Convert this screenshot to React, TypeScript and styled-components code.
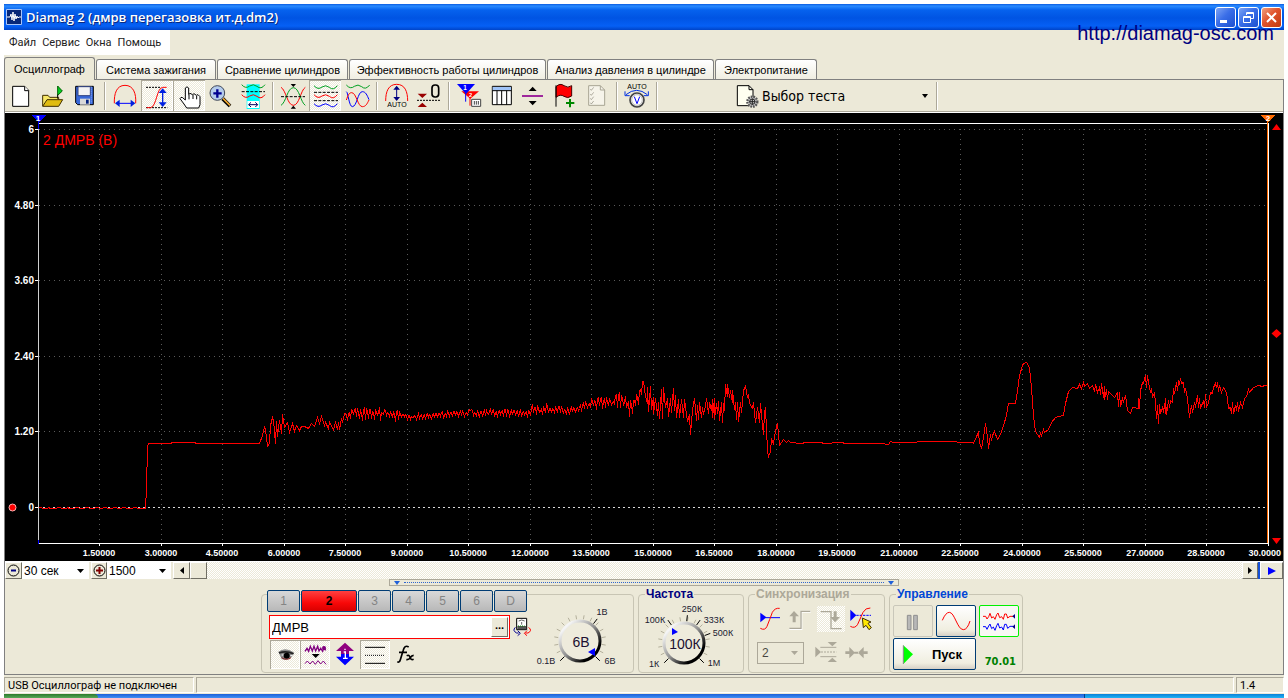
import React, { useLayoutEffect, useRef, useState } from 'react';
import styled, { createGlobalStyle, css } from 'styled-components';

const FACE = '#ece9d8';
const SHADOW = '#aca899';
const SANS = '"Liberation Sans", Arial, sans-serif';
const TAHOMA = 'Tahoma, "DejaVu Sans Condensed", "DejaVu Sans", sans-serif';
const SMALL_UI = 'Roboto, "Noto Sans", sans-serif';

const dither = css`
  background: conic-gradient(#fff 25%, ${FACE} 0 50%, #fff 0 75%, ${FACE} 0) 0 0 / 2px 2px;
`;

const Global = createGlobalStyle`
  * { box-sizing: border-box; }
  body { margin: 0; background: #fff; font-family: ${SANS}; font-size: 11px; color: #000; }
  button, input, select { font-family: inherit; font-size: inherit; color: inherit; margin: 0; }
  svg { display: block; flex: none; }
`;

/* ---------- window frame ---------- */

const Window = styled.div`
  position: relative;
  margin: 4px 4px 0;
  background: ${FACE};
`;

const TitleBar = styled.header`
  display: flex;
  align-items: center;
  gap: 4px;
  height: 26px;
  padding: 0 2px;
  background: linear-gradient(#0a5be0 0, #2a8bff 2px, #0662ee 6px, #0054e3 14px, #0560f5 22px, #0044c8 26px);
`;

const Title = styled.h1`
  flex: 1;
  margin: 0;
  font: 600 13px/20px "Open Sans", "Noto Sans", sans-serif;
  color: #fff;
  text-shadow: 1px 1px 0 #0a2a80;
  white-space: nowrap;
`;

const WindowButtons = styled.div`
  display: flex;
  gap: 2px;
`;

const WindowButton = styled.button<{ $close?: boolean }>`
  width: 21px;
  height: 21px;
  padding: 0;
  border: 1px solid #fff;
  border-radius: 3px;
  background: ${p => (p.$close ? 'linear-gradient(135deg, #f0a080, #e0532c 45%, #c03a10)' : 'linear-gradient(135deg, #7ea4f4, #3a6ee8 45%, #1c50d0)')};
`;

const SiteLink = styled.a`
  position: absolute;
  right: 10px;
  top: 17px;
  font-size: 20px;
  line-height: 24px;
  color: #000080;
  text-decoration: none;
`;

const MenuBar = styled.nav`
  display: flex;
  height: 25px;
`;

const MenuList = styled.div`
  display: flex;
  gap: 6px;
  padding: 0 9px 0 5px;
  background: #fff;
`;

const MenuItem = styled.button`
  padding: 0;
  border: 0;
  background: none;
  font: 11px/24px ${SMALL_UI};
  color: #222;
`;

/* ---------- tabs ---------- */

const Tabs = styled.div`
  display: flex;
  align-items: flex-end;
  gap: 1px;
  height: 24px;
`;

const Tab = styled.button<{ $width: number; $active?: boolean }>`
  width: ${p => p.$width}px;
  height: ${p => (p.$active ? 23 : 20)}px;
  padding: 0;
  border: 1px solid #808080;
  border-bottom: 0;
  border-radius: 3px 3px 0 0;
  background: ${p => (p.$active ? FACE : 'linear-gradient(#fff, #f0eee2)')};
  margin-bottom: ${p => (p.$active ? -1 : 0)}px;
  position: relative;
  z-index: ${p => (p.$active ? 1 : 0)};
  white-space: nowrap;
`;

const TabPage = styled.main`
  border: 1px solid #808080;
`;

/* ---------- toolbar ---------- */

const Toolbar = styled.div`
  display: flex;
  height: 33px;
  border-bottom: 1px solid #fff;
  box-shadow: inset 0 -1px 0 ${SHADOW};
`;

const ToolButton = styled.button<{ $down?: boolean }>`
  width: 32px;
  height: 31px;
  padding: 0;
  border: 0;
  background: none;
  ${p => p.$down && css`
    ${dither}
    box-shadow: inset 1px 1px 0 ${SHADOW}, inset -1px -1px 0 #fff;
  `}
`;

const Separator = styled.span`
  width: 2px;
  height: 28px;
  margin: 2px 3px;
  border-left: 1px solid ${SHADOW};
  border-right: 1px solid #fff;
`;

const TestPicker = styled.button`
  display: flex;
  align-items: center;
  gap: 3px;
  width: 202px;
  height: 31px;
  margin-left: 70px;
  padding: 0 5px 0 2px;
  border: 0;
  background: none;
  font: 14px/16px ${TAHOMA};
  text-align: left;
`;

const PickerLabel = styled.span`
  flex: 1;
`;

/* ---------- chart ---------- */

const ChartBox = styled.section`
  height: 448px;
  overflow: hidden;
  background: #000;
`;

/* ---------- time base row ---------- */

const TimeRow = styled.div`
  display: flex;
  height: 18px;
  border-top: 1px solid #fff;
`;

const SmallButton = styled.button<{ $width: number }>`
  display: flex;
  align-items: center;
  justify-content: center;
  width: ${p => p.$width}px;
  height: 17px;
  padding: 0;
  border: 1px solid;
  border-color: #fff #716f64 #716f64 #fff;
  background: ${FACE};
`;

const SelectWrap = styled.label<{ $width: number }>`
  display: flex;
  align-items: center;
  width: ${p => p.$width}px;
  margin-right: 2px;
  padding: 0 5px 0 2px;
  background: #fff;
`;

const Select = styled.select`
  flex: 1;
  min-width: 0;
  height: 17px;
  padding: 0;
  border: 0;
  appearance: none;
  background: none;
  font-size: 12px;
`;

const Track = styled.div`
  flex: 1;
  ${dither}
`;

const BlueBar = styled.span`
  width: 2px;
  background: #1450d8;
`;

/* ---------- control panel ---------- */

const Panel = styled.section`
  display: flex;
  flex-direction: column;
  align-items: center;
  padding-bottom: 1px;
`;

const Splitter = styled.div`
  display: flex;
  align-items: center;
  width: 510px;
  height: 7px;
  padding: 0 4px;
  gap: 4px;
  border: 1px solid ${SHADOW};
`;

const SplitterDots = styled.span`
  flex: 1;
  border-top: 1px dotted #3068d0;
`;

const Groups = styled.div`
  display: flex;
  align-items: flex-end;
  gap: 4px;
  height: 87px;
  padding-right: 4px;
`;

const ChannelGroup = styled.div`
  display: flex;
  width: 373px;
  height: 79px;
  border: 1px solid #c8c5b4;
  border-radius: 4px;
`;

const ChannelColumn = styled.div`
  width: 270px;
  padding-left: 5px;
`;

const ChannelButtons = styled.div`
  display: flex;
  gap: 1px;
  margin-top: -5px;
`;

const ChannelButton = styled.button<{ $on?: boolean }>`
  width: ${p => (p.$on ? 56 : 33)}px;
  height: 22px;
  padding: 0;
  border: 1px solid #003c74;
  border-radius: 2px;
  font-size: 12px;
  font-weight: ${p => (p.$on ? 'bold' : 'normal')};
  color: ${p => (p.$on ? '#000' : '#848484')};
  background: ${p => (p.$on ? 'linear-gradient(#ff4040, #f80808 60%, #d80000)' : 'linear-gradient(#d8d8d8, #b8b8b8)')};
`;

const NameRow = styled.div`
  display: flex;
  align-items: center;
  gap: 3px;
  margin: 3px 0 1px 2px;
`;

const NameField = styled.div`
  display: flex;
  align-items: center;
  width: 241px;
  height: 24px;
  padding: 1px;
  border: 1px solid #f00;
  background: #fff;
`;

const NameInput = styled.input`
  flex: 1;
  min-width: 0;
  height: 20px;
  padding: 0 1px;
  border: 0;
  background: none;
  font-size: 13px;
`;

const EllipsisButton = styled.button`
  width: 17px;
  height: 20px;
  padding: 0 0 5px;
  border: 1px solid;
  border-color: #fff #716f64 #716f64 #fff;
  background: ${FACE};
  font-weight: bold;
  line-height: 12px;
`;

const ModeRow = styled.div`
  display: flex;
  padding-left: 3px;
`;

const ModeButton = styled.button<{ $down?: boolean }>`
  width: 30px;
  height: 29px;
  padding: 0;
  border: 0;
  background: none;
  ${p => p.$down && css`
    ${dither}
    box-shadow: inset 1px 1px 0 ${SHADOW}, inset -1px -1px 0 #fff;
  `}
`;

const Group = styled.fieldset<{ $width: number }>`
  width: ${p => p.$width}px;
  height: 85px;
  min-width: 0;
  margin: 0;
  padding: 0;
  border: 1px solid #c8c5b4;
  border-radius: 4px;
`;

const Legend = styled.legend<{ $color: string }>`
  margin-left: 6px;
  padding: 0 1px;
  font-size: 12px;
  font-weight: bold;
  line-height: 13px;
  color: ${p => p.$color};
`;

const SyncRow = styled.div`
  display: flex;
  align-items: center;
  gap: 2px;
  height: 34px;
  padding: 2px 0 0 8px;
`;

const SyncButton = styled.button<{ $down?: boolean }>`
  width: 28px;
  height: 26px;
  padding: 0;
  border: 0;
  background: none;
  ${p => p.$down && dither}
`;

const SyncSelect = styled.label`
  display: flex;
  align-items: center;
  width: 47px;
  height: 22px;
  margin-right: 5px;
  padding: 0 5px 0 4px;
  border: 1px solid ${SHADOW};
`;

const RunGrid = styled.div`
  display: grid;
  grid-template-columns: 40px 40px 40px;
  grid-template-rows: 32px 32px;
  gap: 1px 3px;
  padding: 4px 0 0 3px;
`;

const RunButton = styled.button<{ $edge: string; $fill: string; $wide?: boolean }>`
  display: flex;
  align-items: center;
  padding: 0;
  border: 1px solid ${p => p.$edge};
  border-radius: 2px;
  background: ${p => p.$fill};
  grid-column: ${p => (p.$wide ? 'span 2' : 'auto')};
  font-size: 13px;
  font-weight: bold;
`;

const Reading = styled.output`
  align-self: end;
  justify-self: end;
  padding: 0 3px 1px 0;
  font: bold 11px/14px ${TAHOMA};
  color: #008000;
`;

/* ---------- bottom ---------- */

const StatusBar = styled.footer`
  display: flex;
  gap: 2px;
  height: 19px;
  padding: 2px 0 1px;
  font: 11px/15px ${SMALL_UI};
`;

const StatusCell = styled.div<{ $width?: number }>`
  ${p => (p.$width ? css`width: ${p.$width}px;` : css`flex: 1;`)}
  padding-left: 3px;
  border: 1px solid;
  border-color: ${SHADOW} #fff #fff ${SHADOW};
  white-space: nowrap;
`;

const TaskBar = styled.div`
  display: flex;
  height: 4px;
  background: linear-gradient(#1c5fd8, #4090f4);
`;

const TaskStart = styled.span`
  width: 94px;
  border-radius: 0 4px 0 0;
  background: linear-gradient(#2c7a2c, #58a858);
`;

const TaskTray = styled.span`
  width: 200px;
  margin-left: auto;
  border-left: 1px solid #083c90;
  background: linear-gradient(#0c80d8, #20b4f4);
`;

/* ---------- drawings ---------- */

/* Icons are drawn on a grid with three units to the pixel. */
const Glyph = ({ x, y, w, h, children }: { x: number; y: number; w: number; h: number; children: React.ReactNode }) => (
  <svg width={w} height={h} viewBox={`${x} ${y} ${w * 3} ${h * 3}`} fill="none" strokeWidth="3" aria-hidden="true" fontFamily="Liberation Sans">
    {children}
  </svg>
);

const Caret = ({ color = '#000', size = 7 }: { color?: string; size?: number }) => (
  <svg width={size} height="4" viewBox="0 0 8 4" preserveAspectRatio="none" aria-hidden="true">
    <path d="M0 0h8L4 4z" fill={color} />
  </svg>
);

const wave = (x: number, y: number) => `M${x} ${y - 5}q12 14 24 4q11 -8 22 1q12 11 24 -5`;

const TOOLS: { label: string; x: number; y: number; down?: boolean; gapAfter?: boolean; art: React.ReactNode }[] = [
  { label: 'Новый', x: 15, y: 240, art: (
    <g stroke="#000" fill="#fff"><path d="M38 259h36l12 12v48H38z" /><path d="M74 259v13h12" /></g>
  ) },
  { label: 'Открыть', x: 111, y: 240, art: (
    <g stroke="#403000">
      <path d="M128 318v-32h16l5 6h27v8" fill="#f8e868" />
      <path d="M141 299h47l-12 20h-48z" fill="#e0bc10" />
      <path d="M173 258v28l14-13z" fill="#00d020" stroke="#006000" />
      <path d="M173 284v12" stroke="#000" />
    </g>
  ) },
  { label: 'Сохранить', x: 207, y: 240, gapAfter: true, art: (
    <g stroke="#000">
      <path d="M227 259h53v55h-47l-6-6z" fill="#3868d8" />
      <path d="M234 260h37v27h-37z" fill="#f4f4f4" stroke="#304080" />
      <path d="M274 260v50" stroke="#90b0ff" strokeDasharray="3 3" />
      <path d="M240 296h30v18h-30z" fill="#d8d8d8" stroke="none" />
      <path d="M258 299h8v12h-8z" fill="#002080" stroke="none" />
    </g>
  ) },
  { label: 'Масштаб по времени', x: 327, y: 240, art: (
    <g><path d="M343 310c-1-28 6-54 32-54s34 26 32 54" stroke="#f00" />
      <path d="M349 310h52" stroke="#00f" /><path d="M345 310l14-11v22zM406 310l-14-11v22z" fill="#0020e0" /></g>
  ) },
  { label: 'Масштаб по амплитуде', x: 423, y: 240, down: true, art: (
    <g><path d="M438 262h42M438 323h64" stroke="#000" strokeDasharray="6 3" />
      <path d="M440 323h12c18-4 18-60 36-61h12" stroke="#f00" />
      <path d="M488 272v42" stroke="#0020e0" strokeWidth="4" /><path d="M488 265l12 14h-24zM488 321l12-14h-24z" fill="#0020e0" /></g>
  ) },
  { label: 'Рука', x: 519, y: 240, down: true, art: (
    <path d="M556 300V264q5-7 10 0v20l4-4 8 4 4-3 7 5 5-2 6 6v24l-4 10h-36l-8-12-12-16q2-6 8-3z M567 284v14M579 285v12M590 288v10" fill="#fff" stroke="#000" />
  ) },
  { label: 'Лупа', x: 615, y: 240, art: (
    <g><path d="M668 296l22 22" stroke="#000" strokeWidth="11" /><path d="M669 295l21 21" stroke="#f0a830" strokeWidth="5" />
      <circle cx="652" cy="279" r="22" fill="#b4ccec" stroke="#404858" />
      <path d="M640 280h25M652 268v25" stroke="#000090" strokeWidth="7" /></g>
  ) },
  { label: 'Диапазон', x: 711, y: 240, gapAfter: true, art: (
    <g><path d="M740 253h39v74h-39z" fill="#0ff" />
      <path d={wave(725, 259)} stroke="#00a020" /><path d={wave(725, 289)} stroke="#f00" />
      <path d="M725 275h70" stroke="#000" strokeDasharray="9 4" />
      <path d="M742 303h35v21h-35z" fill="#fff" /><path d="M746 314h27M753 307l-7 7 7 7M766 307l7 7-7 7" stroke="#000060" /></g>
  ) },
  { label: 'Совместить', x: 831, y: 240, art: (
    <g><path d="M843 262c15 8 19 54 37 54s22-46 36-54" stroke="#f00" />
      <path d="M843 316c15-8 19-53 37-53s22 45 36 53" stroke="#00a020" />
      <path d="M843 290h72" stroke="#000" strokeDasharray="9 4" />
      <path d="M872 252h16l-8 9zM872 326h16l-8-9z" fill="#000" /></g>
  ) },
  { label: 'Раздельно', x: -33, y: 90, down: true, art: (
    <g><path d={wave(-18, 112)} stroke="#00a020" /><path d={wave(-18, 139)} stroke="#f00" /><path d={wave(-18, 166)} stroke="#00f" />
      <path d="M-18 127h72M-18 152h72" stroke="#000" strokeDasharray="9 4" /></g>
  ) },
  { label: 'Вместе', x: 63, y: 90, gapAfter: true, art: (
    <g><path d={wave(79, 110)} stroke="#00a020" />
      <path d="M79 125c5 0 8 45 18 45 14 0 16-45 30-45 10 0 14 10 20 24" stroke="#00f" />
      <path d="M79 150c5-14 8-22 16-22 14 0 18 42 32 42 10 0 14-8 20-20" stroke="#f00" /></g>
  ) },
  { label: 'Авто масштаб', x: 183, y: 90, art: (
    <g><path d="M197 153c0-28 8-50 33-50s33 22 33 50" stroke="#f00" />
      <path d="M230 112v36" stroke="#000080" /><path d="M230 107l10 12h-20zM230 153l10-12h-20z" fill="#000080" />
      <text x="231" y="171" fontSize="21" textAnchor="middle" fill="#000">AUTO</text></g>
  ) },
  { label: 'Ноль', x: 279, y: 90, gapAfter: true, art: (
    <g><path d="M293 131h28l-14 13zM293 171h28l-14-13z" fill="#900" />
      <path d="M291 151h69" stroke="#000" strokeDasharray="6 3" />
      <rect x="336" y="105" width="20" height="36" rx="9" stroke="#000" strokeWidth="5" /></g>
  ) },
  { label: 'Маркеры', x: 399, y: 90, art: (
    <g><path d="M424 124h53l-26 22z" fill="#f00" /><path d="M450 140v27" stroke="#f00" />
      <path d="M411 102h54l-27 30z" fill="#00f" /><path d="M437 125v30" stroke="#00f" />
      <text x="435" y="120" fontSize="19" fontWeight="bold" textAnchor="middle" fill="#fff">1</text>
      <text x="452" y="142" fontSize="17" fontWeight="bold" textAnchor="middle" fill="#fff">2</text>
      <path d="M455 148h27v21h-27z" fill="#fff" stroke="#444" /><path d="M463 153v11M469 153v11M475 153v11" stroke="#444" /></g>
  ) },
  { label: 'Таблица', x: 495, y: 90, art: (
    <g stroke="#000"><path d="M517 109h57v55h-57z" fill="#fff" /><path d="M518 111h55v10h-55z" fill="#a0c4f8" stroke="none" />
      <path d="M517 122h57M531 122v42M545 122v42M560 122v42" /></g>
  ) },
  { label: 'Разделить', x: 591, y: 90, art: (
    <g><path d="M626 123h24l-12-13zM626 153h24l-12 13z" fill="#000" /><path d="M606 138h63" stroke="#900090" strokeWidth="5" /></g>
  ) },
  { label: 'Флаг', x: 687, y: 90, art: (
    <g><path d="M708 110q12-12 24-3t23 0v31q-12 9-23 1t-24 3z" fill="#f00" stroke="#400" />
      <path d="M708 106v64" stroke="#000" /><path d="M738 159h25M750 147v25" stroke="#008800" strokeWidth="6" /></g>
  ) },
  { label: 'Список', x: 783, y: 90, gapAfter: true, art: (
    <g stroke="#a8a594"><path d="M806 107h35l13 13v46h-48z" fill="#f6f4ea" /><path d="M841 107v13h13" />
      <path d="M811 117l3 4 7-9M811 132l3 4 7-9M811 145l3 4 7-9M811 158l3 4 7-9" stroke="#8c8a7c" strokeWidth="2" /></g>
  ) },
  { label: 'Авто', x: 903, y: 90, gapAfter: true, art: (
    <g><text x="951" y="117" fontSize="21" textAnchor="middle" fill="#000">AUTO</text>
      <path d="M918 134q32-26 64 0" stroke="#0030e0" /><path d="M915 124v13h14M985 124v13h-14" stroke="#0030e0" />
      <circle cx="951" cy="150" r="21" fill="#fff" stroke="#444" strokeWidth="5" />
      <circle cx="951" cy="150" r="16" stroke="#bbb" />
      <path d="M943 140l8 21 8-21" stroke="#00f" /></g>
  ) },
];

/* ---------- trace ---------- */

/* Sample positions run from 38 (0 s) to 1268 (30 s); levels run from 129 (6 V) to 507 (0 V). */
const START = '38,507 41,507 42,508 47,508 48,507 50,508 56,508 57,507 60,507 61,508 66,508 67,507 69,508 74,508 75,507 78,507 79,508 84,508 85,507 88,507 89,508 94,508 95,507 98,507 99,508 102,508 103,507 106,507 107,508 112,508 113,507 116,507 117,508 121,508 122,507 125,507 126,508 132,508 133,507 136,507 137,508 145,508 146,488 147,446 148,443 170,443 172,442 194,442 196,443 259,443 262,435 264,427 265,429 267,446 269,443 270,425 272,417 273,420 275,443 276,421 277,436 279,420 281,433 282,414 284,427 287,422 289,432 292,423 294,431 296,425 299,430 301,426 304,426 308,428 311,423 314,426 317,417 319,423 321,416 324,425 325,422 328,428 329,422 333,429 335,422 337,429 338,422 339,429 341,418 342,422 344,413';

const ENVELOPE: [number, number, number][] = [
  [345, 416, 5], [355, 413, 7], [382, 414, 8], [388, 413, 5], [394, 416, 7], [400, 414, 4], [410, 417, 4], [430, 416, 3],
  [450, 414, 4], [466, 414, 4], [470, 409, 3], [474, 414, 4], [500, 412, 5], [528, 413, 5], [533, 408, 5], [540, 412, 5],
  [547, 408, 5], [555, 410, 5], [575, 411, 4], [583, 407, 6], [590, 404, 5], [602, 403, 7], [612, 403, 6], [619, 401, 10], [628, 407, 10], [636, 404, 11], [642, 390, 7],
];

const END = '642,381 643,381 645,396 647,403 647,387 648,411 650,386 651,409 653,397 653,413 655,398 657,415 658,402 659,418 661,389 662,418 663,387 665,407 667,398 668,416 670,398 671,412 673,388 674,410 675,395 676,417 678,399 679,417 681,399 683,417 684,399 687,421 689,414 690,434 692,410 694,398 696,420 697,405 698,419 699,402 701,417 702,407 703,414 705,405 706,398 708,413 709,402 711,410 712,399 712,417 714,398 714,418 716,403 717,413 718,401 719,420 721,402 722,422 723,403 724,410 725,384 727,396 727,384 729,397 730,390 732,402 732,390 734,409 735,402 736,419 737,402 738,421 740,402 741,412 743,390 745,386 747,397 748,394 749,403 752,408 753,402 755,422 757,407 759,422 760,403 761,414 763,434 764,412 765,407 767,450 768,456 770,451 771,439 773,443 775,430 777,423 778,433 779,445 783,439 786,442 788,440 790,442 800,443 806,442 820,442 824,443 840,442 846,443 880,443 888,444 890,441 893,442 940,441 972,442 973,443 976,436 978,432 979,442 981,448 983,437 985,423 987,437 988,448 990,434 991,440 992,435 994,431 997,439 1000,434 1003,425 1006,415 1008,403 1015,403 1017,390 1019,375 1022,365 1023,363 1026,362 1029,367 1031,387 1033,415 1035,431 1039,437 1040,433 1041,435 1043,429 1044,432 1048,429 1051,422 1055,417 1058,416 1063,415 1065,403 1068,391 1072,387 1077,388 1079,384 1081,388 1083,382 1084,386 1087,383 1089,388 1092,385 1094,391 1095,384 1097,392 1099,387 1100,394 1101,383 1103,397 1104,386 1104,399 1106,389 1107,399 1108,391 1112,395 1114,397 1117,392 1118,406 1119,392 1120,406 1122,398 1123,401 1125,395 1127,410 1130,413 1132,407 1138,408 1138,398 1139,408 1140,390 1142,382 1143,383 1144,379 1145,375 1146,387 1147,375 1149,387 1150,392 1151,388 1152,397 1154,392 1155,402 1156,418 1157,405 1158,423 1159,404 1160,413 1162,407 1163,412 1164,403 1165,413 1165,398 1166,414 1168,400 1169,407 1170,400 1172,402 1173,388 1174,393 1176,382 1177,390 1178,381 1179,383 1180,378 1181,383 1183,382 1184,392 1185,388 1187,398 1188,408 1189,417 1191,405 1192,412 1194,402 1195,407 1197,395 1198,407 1199,398 1200,408 1203,400 1204,407 1205,394 1206,407 1208,402 1210,392 1212,393 1213,387 1215,383 1216,387 1217,382 1218,391 1219,385 1221,392 1223,387 1226,392 1227,398 1228,408 1230,407 1231,413 1232,402 1233,413 1235,405 1236,410 1237,402 1238,411 1240,402 1242,407 1244,398 1246,396 1248,389 1249,392 1253,387 1258,385 1262,386 1264,385 1268,385';

const parse = (s: string) => s.split(' ').map(p => p.split(',').map(Number) as [number, number]);

function noisyPart(): [number, number][] {
  const out: [number, number][] = [];
  let seed = 11;
  for (let x = 345; x < 642; x += 1) {
    const i = ENVELOPE.findIndex(e => e[0] > x) - 1;
    const a = ENVELOPE[i];
    const b = ENVELOPE[i + 1];
    const t = (x - a[0]) / (b[0] - a[0]);
    seed = (seed * 1103515245 + 12345) % 2147483648;
    const r = seed / 2147483648;
    const sign = Math.floor(x / 1.5) % 2 ? 1 : -1;
    out.push([x, Math.round(a[1] + (b[1] - a[1]) * t + sign * (a[2] + (b[2] - a[2]) * t) * (0.05 + 0.9 * r))]);
  }
  return out;
}

const TRACE = [...parse(START), ...noisyPart(), ...parse(END)];

const LEFT = 33;
const TOP = 10;
const BOTTOM = 430;
const ZERO = 394;

const Chart = () => {
  const box = useRef<HTMLElement>(null);
  const [width, setWidth] = useState(1278);
  useLayoutEffect(() => {
    const el = box.current;
    if (!el) return;
    const measure = () => setWidth(el.clientWidth);
    measure();
    const ro = new ResizeObserver(measure);
    ro.observe(el);
    return () => ro.disconnect();
  }, []);

  const right = width - 15;
  const px = (sec: number) => Math.floor(LEFT + ((right - LEFT) * sec) / 30);
  const py = (v: number) => Math.round(ZERO - v * 63);
  const times = Array.from({ length: 20 }, (_, i) => (i + 1) * 1.5);
  const levels = [6, 4.8, 3.6, 2.4, 1.2, 0];
  const points = TRACE.map(([x, y]) => `${(LEFT + 0.5 + ((x - 38) / 1230) * (right - LEFT)).toFixed(1)},${y - 112.5}`).join(' ');

  return (
    <ChartBox ref={box}>
      <svg width={width} height="448" fontFamily="Liberation Sans" fontWeight="bold" role="img" aria-label="2 ДМРВ (В)">
        <g stroke="#5a5a5a" strokeDasharray="1 4" shapeRendering="crispEdges">
          {times.slice(0, -1).map(t => <path key={t} d={`M${px(t) + 0.5} 16V${BOTTOM}`} />)}
          {levels.slice(0, -1).map(v => <path key={v} d={`M${LEFT + 1} ${py(v) + 0.5}H${right}`} />)}
        </g>
        <path d={`M${LEFT} ${ZERO + 0.5}H${right}`} stroke="#d8d8d8" strokeDasharray="2 3" shapeRendering="crispEdges" />
        <polyline points={points} fill="none" stroke="#f00" shapeRendering="crispEdges" />
        <g stroke="#fff" shapeRendering="crispEdges">
          <path d={`M${LEFT} ${TOP + 0.5}H${right}M${LEFT} ${BOTTOM + 0.5}H${right + 1}M${right + 0.5} ${TOP}V${BOTTOM}`} />
          <path d={`M${LEFT + 0.5} 14V${BOTTOM}`} stroke="#d0d0d0" />
          {levels.map(v => <path key={v} d={`M${LEFT - 3} ${py(v) + 0.5}h3`} />)}
          {times.map(t => <path key={t} d={`M${px(t) + 0.5} ${BOTTOM}v3`} />)}
        </g>
        <g shapeRendering="crispEdges">
          <path d={`M${LEFT + 0.5} 8V16M${LEFT + 0.5} 427V431`} stroke="#00f" />
          <path d={`M${right - 0.5} 8V${BOTTOM}`} stroke="#ff6a00" />
          <path d={`M${LEFT - 7} 2h15l-7 7z`} fill="#00f" />
          <path d={`M${right - 8} 2h15l-7 7z`} fill="#ff6a00" />
        </g>
        <g fill="#f00">
          <path d={`M${right + 4} 17h9l-4.500-6z M${right + 4} 425h9l-4.500 6z M${right + 8.5} 216l5 4.500-5 4.500-5-4.500z`} />
          <circle cx="7.5" cy="394.500" r="3.500" stroke="#ffb0b0" />
        </g>
        <g fill="#fff" fontSize="9" textAnchor="middle">
          <text x={LEFT} y="8" fontSize="8">1</text>
          <text x={right} y="8" fontSize="8">2</text>
          {times.slice(0, -1).map(t => <text key={t} x={px(t)} y="443">{t.toFixed(5)}</text>)}
          <text x={width - 2} y="443" textAnchor="end">30.0000</text>
        </g>
        <g fill="#fff" fontSize="10" textAnchor="end">
          {levels.map(v => <text key={v} x={LEFT - 4} y={py(v) + 4}>{v === 6 || v === 0 ? v : v.toFixed(2)}</text>)}
        </g>
        <text x={LEFT + 5} y="32" fontSize="14" fontWeight="normal" fill="#f00">2 ДМРВ (В)</text>
      </svg>
    </ChartBox>
  );
};

/* ---------- knobs ---------- */

type Mark = { angle: number; text: string; x: number; y: number };

const Knob = ({ id, cx, cy, value, pointer, marks }: { id: string; cx: number; cy: number; value: string; pointer: string; marks: Mark[] }) => {
  const at = (deg: number, r: number) => `${(cx + r * Math.cos((deg * Math.PI) / 180)).toFixed(1)} ${(cy - r * Math.sin((deg * Math.PI) / 180)).toFixed(1)}`;
  const ticks = Array.from({ length: 16 }, (_, i) => 225 - i * 18);
  return (
    <svg width="101" height="76" fontFamily="Liberation Sans" textAnchor="middle" role="img" aria-label={value}>
      <defs>
        <linearGradient id={id} x1="0" y1="0" x2="1" y2="1">
          <stop offset="0.15" stopColor="#f4f4f4" />
          <stop offset="0.5" stopColor="#909090" />
          <stop offset="0.8" stopColor="#000" />
        </linearGradient>
      </defs>
      {ticks.map(a => <path key={a} d={`M${at(a, 22)}L${at(a, 26)}`} stroke="#b4b09c" />)}
      {marks.map(m => <path key={m.text} d={`M${at(m.angle, 22)}L${at(m.angle, 28)}`} stroke="#000" />)}
      <circle cx={cx} cy={cy} r="20" fill="#eeebdc" stroke={`url(#${id})`} strokeWidth="3" />
      <path d={pointer} fill="#00f" />
      <text x={cx + 1} y={cy + 6} fontSize="14" fill="#201030">{value}</text>
      <g fontSize="9" fill="#202030">
        {marks.map(m => <text key={m.text} x={m.x} y={m.y}>{m.text}</text>)}
      </g>
    </svg>
  );
};

const MENU = ['Файл', 'Сервис', 'Окна', 'Помощь'];
const TABS: [string, number][] = [
  ['Осциллограф', 91], ['Система зажигания', 120], ['Сравнение цилиндров', 131],
  ['Эффективность работы цилиндров', 197], ['Анализ давления в цилиндре', 167], ['Электропитание', 102],
];

export default function App() {
  return (
    <Window>
      <Global />
      <TitleBar>
        <svg width="16" height="16" viewBox="0 0 16 16" aria-hidden="true">
          <path d="M0.500 0.500h15v15h-15z" fill="#082878" stroke="#a8c4f8" />
          <path d="M1 8h3l1-3 1 6 1-8 1 9 1-7 1 5 1-3 1 2 1-1h2" fill="none" stroke="#fff" />
        </svg>
        <Title>Diamag 2 (дмрв перегазовка ит.д.dm2)</Title>
        <WindowButtons>
          <WindowButton aria-label="Свернуть"><svg width="19" height="19"><path d="M4 12h7v3H4z" fill="#fff" /></svg></WindowButton>
          <WindowButton aria-label="Восстановить">
            <svg width="19" height="19" fill="none" stroke="#fff"><path d="M4.500 8.500h7v6h-7zM4 9.500h8M7.500 7V4.500h7v6H12M7 5.500h8" /></svg>
          </WindowButton>
          <WindowButton $close aria-label="Закрыть"><svg width="19" height="19"><path d="M5 5l9 9M14 5l-9 9" stroke="#fff" strokeWidth="2" /></svg></WindowButton>
        </WindowButtons>
      </TitleBar>
      <SiteLink href="#site">http://diamag-osc.com</SiteLink>
      <MenuBar>
        <MenuList>{MENU.map(m => <MenuItem key={m}>{m}</MenuItem>)}</MenuList>
      </MenuBar>
      <Tabs role="tablist">
        {TABS.map(([name, w], i) => <Tab key={name} role="tab" aria-selected={i === 0} $width={w} $active={i === 0}>{name}</Tab>)}
      </Tabs>
      <TabPage>
        <Toolbar>
          {TOOLS.map(t => (
            <React.Fragment key={t.label}>
              <ToolButton $down={t.down} aria-label={t.label}><Glyph x={t.x} y={t.y} w={32} h={31}>{t.art}</Glyph></ToolButton>
              {t.gapAfter && <Separator />}
            </React.Fragment>
          ))}
          <TestPicker>
            <Glyph x={219} y={90} w={26} h={31}>
              <g stroke="#000"><path d="M232 107h35l12 12v48h-47z" fill="#fffff0" /><path d="M267 107v12h12" /></g>
              <circle cx="277" cy="155" r="15" fill="#c4c4c4" stroke="#555" strokeWidth="7" strokeDasharray="5 3" />
              <circle cx="277" cy="155" r="8" stroke="#222" /><path d="M268 155h18M277 146v18" stroke="#222" />
            </Glyph>
            <PickerLabel>Выбор теста</PickerLabel>
            <Caret size={6} />
          </TestPicker>
          <Separator />
        </Toolbar>
        <Chart />
        <TimeRow>
          <SmallButton $width={17} aria-label="Уменьшить">
            <svg width="13" height="13"><circle cx="6.500" cy="6.500" r="5.500" fill="none" stroke="#000" /><path d="M4 6.500h5" stroke="#000080" strokeWidth="2" /></svg>
          </SmallButton>
          <SelectWrap $width={67}>
            <Select aria-label="Развёртка"><option>30 сек</option></Select>
            <Caret />
          </SelectWrap>
          <SmallButton $width={16} aria-label="Увеличить">
            <svg width="13" height="13"><circle cx="6.500" cy="6.500" r="5.500" fill="none" stroke="#000" /><path d="M3 6.500h7M6.500 3v7" stroke="#800000" strokeWidth="2" /></svg>
          </SmallButton>
          <SelectWrap $width={64}>
            <Select aria-label="Точек"><option>1500</option></Select>
            <Caret />
          </SelectWrap>
          <SmallButton $width={17} aria-label="Влево"><svg width="4" height="7"><path d="M4 0v7L0 3.500z" /></svg></SmallButton>
          <SmallButton $width={17} aria-label="Ползунок" />
          <Track />
          <SmallButton $width={16} aria-label="Вправо"><svg width="4" height="7"><path d="M0 0v7l4-3.500z" /></svg></SmallButton>
          <BlueBar />
          <SmallButton $width={23} aria-label="В конец"><svg width="8" height="8"><path d="M0 0v8l8-4z" fill="#00f" /></svg></SmallButton>
        </TimeRow>
        <Panel>
          <Splitter>
            <Caret color="#2060d8" size={6} /><SplitterDots /><Caret color="#2060d8" size={6} />
          </Splitter>
          <Groups>
            <ChannelGroup>
              <ChannelColumn>
                <ChannelButtons>
                  {['1', '2', '3', '4', '5', '6', 'D'].map(c => <ChannelButton key={c} $on={c === '2'}>{c}</ChannelButton>)}
                </ChannelButtons>
                <NameRow>
                  <NameField>
                    <NameInput aria-label="Имя канала" defaultValue="ДМРВ" />
                    <EllipsisButton aria-label="Выбрать датчик">...</EllipsisButton>
                  </NameField>
                  <Glyph x={773} y={123} w={19} h={20}>
                    <path d="M784 127h30v34h-30z" fill="#fff" stroke="#000" /><path d="M786 150h26v9h-26z" fill="#555" />
                    <path d="M790 135q9-6 18 0M799 138v8" stroke="#666" /><path d="M788 150h20" stroke="#080" strokeDasharray="3 3" />
                    <path d="M780 154q-10 10 4 17h6M787 164l8 8-8 7" stroke="#000090" />
                    <path d="M820 154q12 10-2 17h-8M815 164l-8 8 8 7" stroke="#f00" />
                  </Glyph>
                </NameRow>
                <ModeRow>
                  <ModeButton $down aria-label="Показать">
                    <Glyph x={45} y={195} w={30} h={29}>
                      <path d="M70 230q20-16 46 2l-6 14q-14 12-30 6z" fill="#888" />
                      <path d="M72 234q20-8 44 2" stroke="#222" strokeWidth="5" />
                      <circle cx="95" cy="242" r="9" fill="#000" /><path d="M80 248q14 10 28 0" stroke="#822" /><path d="M80 240h5M106 242h5" stroke="#fff" />
                    </Glyph>
                  </ModeButton>
                  <ModeButton $down aria-label="Фильтр">
                    <Glyph x={135} y={195} w={30} h={29}>
                      <path d="M150 229l6-9 5 9 5-15 6 14 5-14 5 14 6-14 4 14 5-8 6 9 4-12 5 9" stroke="#800080" strokeWidth="4" />
                      <circle cx="207" cy="219" r="6" fill="#800080" />
                      <path d="M170 237h24l-12 12z" fill="#000" />
                      <path d="M150 266l7-8 8 9 8-9 8 10 8-11 8 10 8-9 8 10" stroke="#800080" />
                    </Glyph>
                  </ModeButton>
                  <ModeButton aria-label="Инвертировать">
                    <Glyph x={223} y={195} w={30} h={29}>
                      <path d="M268 203l27 25h-15v9h-24v-9h-15z" fill="#900080" /><path d="M268 271l27-26h-15v-8h-24v8h-15z" fill="#00f" />
                      <path d="M268 221v4M264 231h5v18M262 250h14" stroke="#fff" strokeWidth="4" />
                    </Glyph>
                  </ModeButton>
                  <ModeButton $down aria-label="Уровни">
                    <Glyph x={315} y={195} w={30} h={29}>
                      <path d="M330 217h60M330 265h60" stroke="#000" /><path d="M330 241h60" stroke="#000" strokeDasharray="3 3" />
                    </Glyph>
                  </ModeButton>
                  <ModeButton aria-label="Функция">
                    <Glyph x={405} y={195} w={30} h={29}>
                      <path d="M461 216q-12-8-17 12l-8 26q-3 10-9 6M432 232h24" stroke="#000" strokeWidth="5" />
                      <path d="M455 242q8-4 10 5t11 6M476 241q-6 0-10 7t-12 6" stroke="#000" strokeWidth="5" />
                    </Glyph>
                  </ModeButton>
                </ModeRow>
              </ChannelColumn>
              <Knob id="volt" cx={48} cy={46} value="6В" pointer="M56 57l7-4v8z"
                marks={[{ angle: 225, text: '0.1В', x: 14, y: 69 }, { angle: 52, text: '1В', x: 70, y: 20 }, { angle: -45, text: '6В', x: 78, y: 69 }]} />
            </ChannelGroup>
            <Group $width={106}>
              <Legend $color="#000080">Частота</Legend>
              <Knob id="freq" cx={45} cy={42} value="100К" pointer="M33 27v7l6-3z"
                marks={[
                  { angle: 225, text: '1К', x: 15, y: 66 }, { angle: 125, text: '100К', x: 16, y: 22 }, { angle: 83, text: '250К', x: 53, y: 11 },
                  { angle: 55, text: '333К', x: 75, y: 22 }, { angle: 20, text: '500К', x: 84, y: 35 }, { angle: -45, text: '1М', x: 75, y: 65 },
                ]} />
            </Group>
            <Group $width={137} disabled>
              <Legend $color={SHADOW}>Синхронизация</Legend>
              <SyncRow>
                <SyncButton aria-label="Уровень">
                  <Glyph x={36} y={93} w={28} h={26}>
                    <path d="M46 113v29l18-15z" fill="#00f" /><path d="M60 128h45" stroke="#00f" />
                    <path d="M46 160q14 8 20-6 8-20 16-42 8-14 22-12" stroke="#f00" />
                  </Glyph>
                </SyncButton>
                <SyncButton aria-label="Фронт">
                  <Glyph x={128} y={93} w={28} h={26}>
                    <path d="M135 162h36v-52h28" stroke="#fff" strokeWidth="6" /><path d="M135 160h35v-51h28" stroke={SHADOW} strokeWidth="4" />
                    <path d="M149 108l15 16h-10v18h-9v-18h-10z" fill={SHADOW} />
                  </Glyph>
                </SyncButton>
                <SyncButton $down aria-label="Спад">
                  <Glyph x={217} y={93} w={28} h={26}>
                    <path d="M228 110h31v51h32" stroke={SHADOW} strokeWidth="4" />
                    <path d="M271 142l15-16h-10v-17h-9v17h-10z" fill={SHADOW} />
                  </Glyph>
                </SyncButton>
                <SyncButton aria-label="Выбор уровня">
                  <Glyph x={306} y={93} w={28} h={26}>
                    <path d="M316 104v34l18-17z" fill="#00f" /><path d="M334 121h44" stroke="#00f" strokeDasharray="7 3" />
                    <path d="M316 154q14 8 22-6 8-18 16-36 8-14 22-13" stroke="#f00" />
                    <path d="M352 129l26 12-9 4 10 13-7 6-9-13-8 7z" fill="#ffe800" stroke="#403000" />
                  </Glyph>
                </SyncButton>
              </SyncRow>
              <SyncRow>
                <SyncSelect>
                  <Select aria-label="Канал синхронизации"><option>2</option></Select>
                  <Caret color={SHADOW} />
                </SyncSelect>
                <SyncButton aria-label="По центру">
                  <Glyph x={202} y={192} w={28} h={26}>
                    <path d="M215 212v32l17-16zM252 198h28l-14 13zM252 258h28l-14-13z" fill={SHADOW} />
                    <path d="M230 214h48M230 242h48" stroke={SHADOW} /><path d="M232 228h46" stroke={SHADOW} strokeDasharray="6 3" />
                  </Glyph>
                </SyncButton>
                <SyncButton aria-label="Сжать">
                  <Glyph x={290} y={192} w={28} h={26}>
                    <path d="M303 226h12v-13l17 17-17 17v-13h-12zM370 226h-12v-13l-17 17 17 17v-13h12zM330 227h14v6h-14z" fill={SHADOW} />
                  </Glyph>
                </SyncButton>
              </SyncRow>
            </Group>
            <Group $width={134}>
              <Legend $color="#0046d5">Управление</Legend>
              <RunGrid>
                <RunButton $edge="#c9c7ba" $fill={FACE} disabled aria-label="Пауза">
                  <Glyph x={447} y={93} w={38} h={30}><path d="M487 121h11v43h-11zM506 121h11v43h-11z" fill="#b8b8b8" stroke="#909090" /></Glyph>
                </RunButton>
                <RunButton $edge="#003c74" $fill="linear-gradient(#fff, #f0eee0 80%, #d6d0c5)" aria-label="Осциллограмма">
                  <Glyph x={576} y={93} w={38} h={30}><path d="M592 136q10-24 21-24c16 0 24 52 42 52q12 0 20-26" stroke="#f00" /></Glyph>
                </RunButton>
                <RunButton $edge="#00f000" $fill="#f8f8f4" aria-label="Два канала">
                  <Glyph x={705} y={93} w={38} h={30}>
                    <path d="M714 124h8l4 8 5-7 4-10 5 14 5-4 5 8 5-14 4-5 5 14 6-3 5 8 4-16 5 0 4 12 7-5h9" stroke="#f00" />
                    <path d="M714 155h8l4 8 5-10 4-6 5 14 5-5 5 10 5-14 4-7 5 14 6-3 5 9 4-17 5 0 4 12 7-6h9" stroke="#00f" />
                    <path d="M810 117v14l-8-7zM810 148v14l-8-7z" fill="#000080" />
                  </Glyph>
                </RunButton>
                <RunButton $wide $edge="#003c74" $fill="linear-gradient(#fff, #f0eee0 80%, #d6d0c5)">
                  <Glyph x={447} y={192} w={38} h={30}><path d="M475 211v56l29-29z" fill="#0f0" /><path d="M475 211v56" stroke="#888" /></Glyph>
                  Пуск
                </RunButton>
                <Reading>70.01</Reading>
              </RunGrid>
            </Group>
          </Groups>
        </Panel>
      </TabPage>
      <StatusBar>
        <StatusCell $width={190}>USB Осциллограф не подключен</StatusCell>
        <StatusCell />
        <StatusCell $width={48}>1.4</StatusCell>
      </StatusBar>
      <TaskBar><TaskStart /><TaskTray /></TaskBar>
    </Window>
  );
}
